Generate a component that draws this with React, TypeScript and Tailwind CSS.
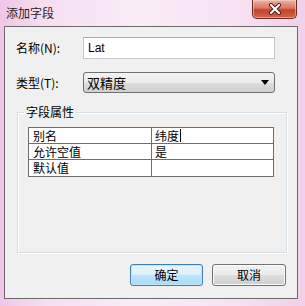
const cjk = "font-['Microsoft_YaHei','Noto_Sans_CJK_SC',sans-serif]"

function CloseButton() {
  return (
    <div className="w-[45px] h-[19px] rounded-b-[5px] border border-t-0 border-[#6b2a22] bg-[linear-gradient(180deg,#eab4a6_0%,#d9765f_45%,#c2432c_55%,#d2654b_100%)] shadow-[inset_0_0_0_1px_rgba(255,220,210,0.5)] flex items-center justify-center">
      <svg width="14" height="12" viewBox="0 0 14 12">
        <path d="M3 2 L11 10 M11 2 L3 10" stroke="#4a1a14" strokeWidth="4" strokeLinecap="round" />
        <path d="M3 2 L11 10 M11 2 L3 10" stroke="#ffffff" strokeWidth="2.2" strokeLinecap="round" />
      </svg>
    </div>
  )
}

function Row({ k, v, caret }: { k: string; v: string; caret?: boolean }) {
  return (
    <div className="flex h-[16px] border-b border-[#6e6e6e] last:border-b-0">
      <div className="w-[123px] border-r border-[#6e6e6e] pl-[4px] leading-[16px]">{k}</div>
      <div className="flex-1 pl-[3px] leading-[16px] flex items-center">
        {v}
        {caret && <span className="ml-[1px] w-[1px] h-[13px] bg-black" />}
      </div>
    </div>
  )
}

export default function App() {
  return (
    <div className={`w-[305px] h-[306px] flex flex-col bg-[linear-gradient(90deg,#f0c6e6_0%,#f6dff1_15%,#f9ecf7_45%,#f7e4f3_75%,#f1d0ea_100%)] text-[12px] text-black ${cjk}`}>
      <div className="h-[26px] flex items-start justify-between pl-[6px] pr-[8px] shrink-0">
        <div className="pt-[4px] text-[12px] text-[#1e1e1e]">添加字段</div>
        <CloseButton />
      </div>

      <div className="ml-[4px] mr-[7px] h-[273px] border border-[#6a6a6a] bg-[#f0f0f0] flex flex-col">
        <div className="flex items-center pl-[11px] mt-[10px] h-[22px]">
          <span className="w-[67px]">名称(N):</span>
          <div className="w-[192px] h-[22px] bg-white border border-[#c2c6cc] border-t-[#abadb3] pl-[4px] flex items-center font-['Liberation_Sans',sans-serif] text-[12px]">Lat</div>
        </div>

        <div className="flex items-center pl-[11px] mt-[13px] h-[21px]">
          <span className="w-[67px]">类型(T):</span>
          <div className="w-[192px] h-[21px] rounded-[3px] border border-[#707070] bg-[linear-gradient(180deg,#f2f2f2_0%,#ebebeb_50%,#dddddd_51%,#cfcfcf_100%)] pl-[3px] pr-[5px] flex items-center justify-between">
            <span className="text-[13px]">双精度</span>
            <svg width="8" height="5" viewBox="0 0 8 5"><path d="M0 0 H8 L4 5 Z" fill="#000" /></svg>
          </div>
        </div>

        <div className="relative ml-[12px] mt-[19px] w-[270px] h-[141px] border border-[#d5dfe5] shadow-[inset_1px_1px_0_#ffffff,1px_1px_0_#ffffff] pt-[14px] pl-[10px]">
          <span className="absolute left-[6px] top-[-9px] px-[2px] bg-[#f0f0f0] leading-[16px]">字段属性</span>
          <div className="w-[246px] border border-[#6e6e6e] bg-white">
            <Row k="别名" v="纬度" caret />
            <Row k="允许空值" v="是" />
            <Row k="默认值" v="" />
          </div>
        </div>

        <div className="flex justify-end gap-[9px] pr-[11px] mt-[11px]">
          <div className="w-[73px] h-[22px] rounded-[3px] border border-[#3c7fb1] bg-[linear-gradient(180deg,#eaf6fd_0%,#d9f0fc_50%,#bee6fd_51%,#a7d9f5_100%)] shadow-[inset_0_0_0_1px_#c0e8fb] flex items-center justify-center">确定</div>
          <div className="w-[74px] h-[22px] rounded-[3px] border border-[#707070] bg-[linear-gradient(180deg,#f2f2f2_0%,#ebebeb_50%,#dddddd_51%,#cfcfcf_100%)] shadow-[inset_0_0_0_1px_#fcfcfc] flex items-center justify-center">取消</div>
        </div>
      </div>
    </div>
  )
}
